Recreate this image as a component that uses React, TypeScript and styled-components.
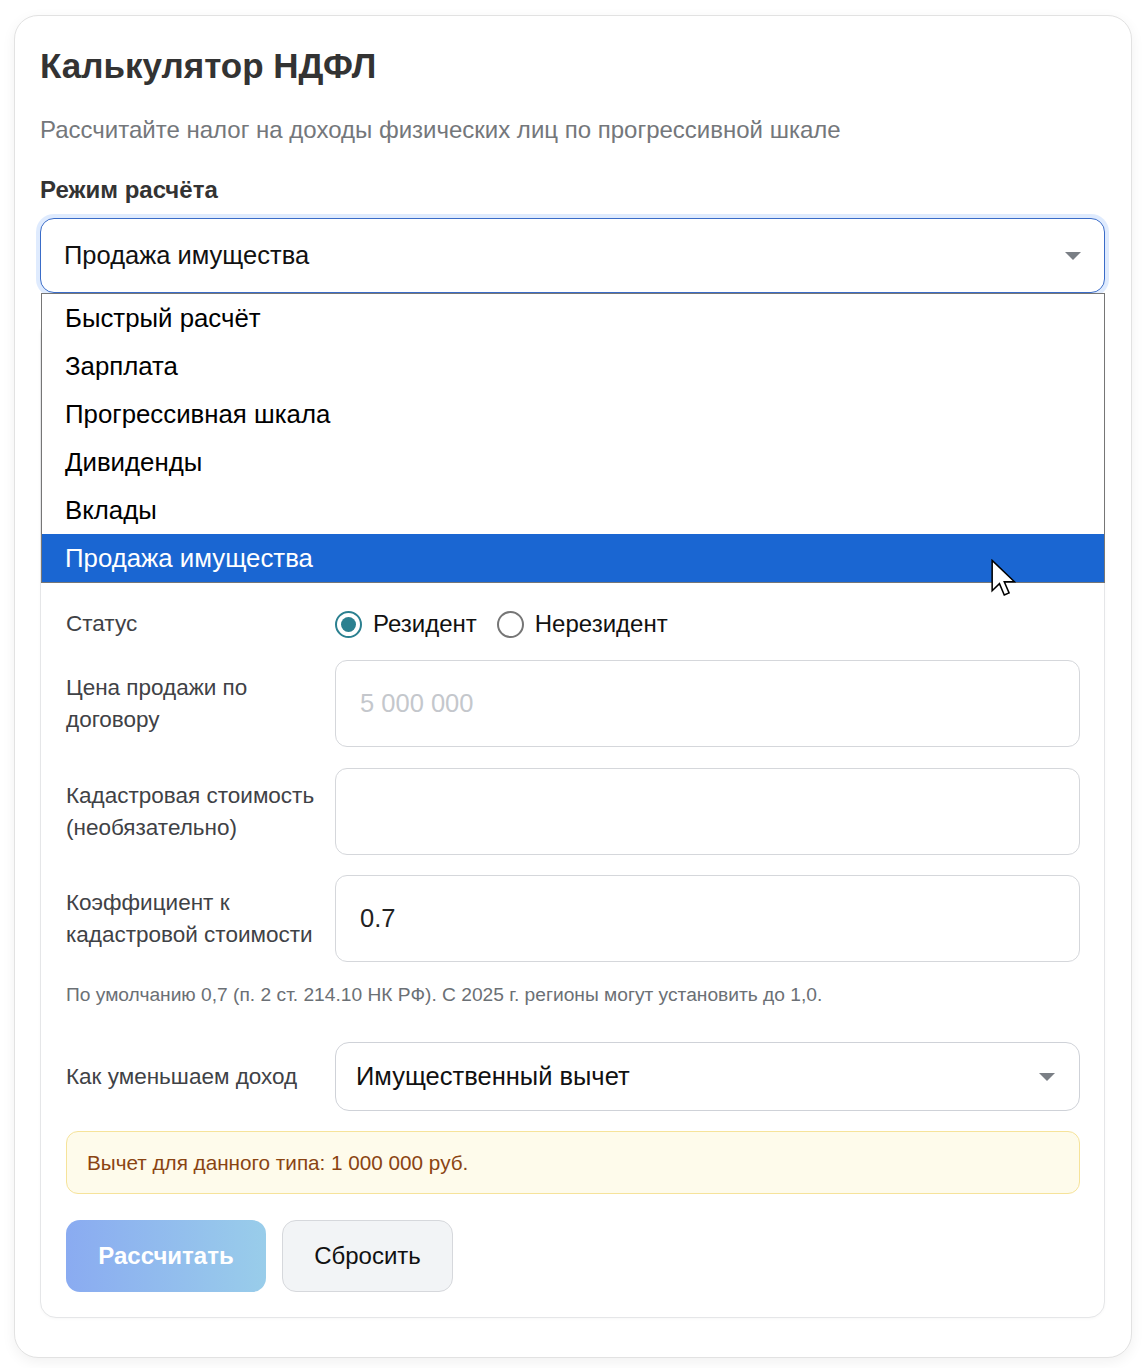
import React from "react";
import styled, { createGlobalStyle } from "styled-components";

const GlobalStyle = createGlobalStyle`
  *, *::before, *::after { box-sizing: border-box; }
  html, body { margin: 0; padding: 0; background: #ffffff; }
  body { font-family: "Liberation Sans", Arial, "Noto Sans", sans-serif; color: #222; }
`;

const Page = styled.div`
  padding: 15px 12px 10px 14px;
`;

const Card = styled.div`
  width: 1118px;
  border: 1px solid #e2e2e2;
  border-radius: 24px;
  background: #fff;
  box-shadow: 0 4px 14px rgba(0, 0, 0, 0.06);
  padding: 25px 26px 39px 25px;
`;

const Title = styled.h1`
  margin: 0;
  font-size: 35px;
  line-height: 50px;
  font-weight: 700;
  color: #333;
`;

const Description = styled.p`
  margin: 22px 0 0;
  font-size: 24px;
  line-height: 33px;
  color: #74777b;
`;

const ModeLabel = styled.div`
  margin-top: 27px;
  font-size: 24px;
  line-height: 33px;
  font-weight: 700;
  color: #333;
`;

const SelectWrap = styled.div<{ $mt?: number }>`
  position: relative;
  margin-top: ${(p) => p.$mt ?? 0}px;
  z-index: 2;
`;

const SelectBox = styled.div<{ $focused?: boolean; $h: number; $pl: number; $pr: number }>`
  display: flex;
  align-items: center;
  justify-content: space-between;
  height: ${(p) => p.$h}px;
  padding: 0 ${(p) => p.$pr}px 0 ${(p) => p.$pl}px;
  border: 1px solid ${(p) => (p.$focused ? "#3a6cc8" : "#cfd2d8")};
  border-radius: 14px;
  background: #fff;
  box-shadow: ${(p) => (p.$focused ? "0 0 0 4px rgba(59, 130, 246, 0.16)" : "none")};
  font-size: 25.5px;
  color: #111;
`;

const Caret = styled.svg`
  display: block;
  flex: none;
`;

const Dropdown = styled.ul`
  position: absolute;
  top: 100%;
  left: 1px;
  right: 0;
  margin: 0;
  padding: 0;
  list-style: none;
  background: #fff;
  border: 1px solid #767676;
  z-index: 5;
`;

const Option = styled.li<{ $selected?: boolean }>`
  position: relative;
  height: 48px;
  display: flex;
  align-items: center;
  padding-left: 23px;
  font-size: 25.8px;
  color: ${(p) => (p.$selected ? "#fff" : "#000")};
  background: ${(p) => (p.$selected ? "#1a66d2" : "#fff")};
`;

const Cursor = styled.svg`
  position: absolute;
  left: 949px;
  top: 25px;
  pointer-events: none;
`;

const Panel = styled.div`
  margin-top: 25px;
  border: 1px solid #e5e6e8;
  border-radius: 16px;
  background: #fff;
  box-shadow: 0 1px 3px rgba(0, 0, 0, 0.03);
  padding: 25px 24px 25px 25px;
  display: flex;
  flex-direction: column;
`;

const Row = styled.div<{ $mt?: number }>`
  display: grid;
  grid-template-columns: 252px 1fr;
  column-gap: 17px;
  align-items: center;
  margin-top: ${(p) => p.$mt ?? 0}px;
`;

const RowLabel = styled.div`
  font-size: 22.5px;
  line-height: 32px;
  color: #3f4246;
`;

const RadioGroup = styled.div`
  display: flex;
  align-items: center;
  height: 40px;
`;

const RadioOption = styled.label`
  display: flex;
  align-items: center;
  gap: 11px;
  margin-right: 20px;
  font-size: 24px;
  color: #111;
`;

const RadioDot = styled.span<{ $checked?: boolean }>`
  width: 27px;
  height: 27px;
  border-radius: 50%;
  border: 2px solid ${(p) => (p.$checked ? "#2b8090" : "#767676")};
  display: flex;
  align-items: center;
  justify-content: center;
  &::after {
    content: "";
    width: 15px;
    height: 15px;
    border-radius: 50%;
    background: ${(p) => (p.$checked ? "#2b8090" : "transparent")};
  }
`;

const Input = styled.input`
  height: 87px;
  width: 100%;
  border: 1px solid #d5d7db;
  border-radius: 12px;
  padding: 0 24px;
  font-family: inherit;
  font-size: 25.5px;
  color: #222;
  background: #fff;
  outline: none;
  &::placeholder {
    color: #c4c7cc;
  }
`;

const Hint = styled.div<{ $mt?: number }>`
  margin-top: ${(p) => p.$mt ?? 0}px;
  font-size: 19.2px;
  line-height: 29px;
  color: #6b7075;
`;

const Alert = styled.div`
  margin-top: 20px;
  height: 63px;
  display: flex;
  align-items: center;
  padding: 0 20px;
  background: #fefbeb;
  border: 1px solid #f6e39a;
  border-radius: 12px;
  font-size: 20.7px;
  color: #8a4412;
`;

const Buttons = styled.div`
  margin-top: 26px;
  display: flex;
  gap: 16px;
`;

const PrimaryButton = styled.button`
  width: 200px;
  height: 72px;
  border: none;
  border-radius: 14px;
  background: linear-gradient(90deg, #8aabf1 0%, #99cdea 100%);
  color: #fff;
  font-family: inherit;
  font-size: 24px;
  font-weight: 700;
`;

const SecondaryButton = styled.button`
  width: 171px;
  height: 72px;
  border: 1px solid #d6d8dc;
  border-radius: 14px;
  background: #f2f4f6;
  color: #111;
  font-family: inherit;
  font-size: 24px;
`;

const CaretIcon = () => (
  <Caret width="16" height="8" viewBox="0 0 16 8">
    <polygon points="0,0 16,0 8,8" fill="#7a7f85" />
  </Caret>
);

const modes = [
  "Быстрый расчёт",
  "Зарплата",
  "Прогрессивная шкала",
  "Дивиденды",
  "Вклады",
  "Продажа имущества",
];

export default function App() {
  return (
    <>
      <GlobalStyle />
      <Page>
        <Card>
          <Title>Калькулятор НДФЛ</Title>
          <Description>
            Рассчитайте налог на доходы физических лиц по прогрессивной шкале
          </Description>
          <ModeLabel>Режим расчёта</ModeLabel>
          <SelectWrap $mt={12}>
            <SelectBox $focused $h={75} $pl={23} $pr={23}>
              <span>Продажа имущества</span>
              <CaretIcon />
            </SelectBox>
            <Dropdown>
              {modes.map((m) => (
                <Option key={m} $selected={m === "Продажа имущества"}>
                  {m}
                  {m === "Продажа имущества" && (
                    <Cursor width="25" height="38" viewBox="0 0 13 19.5">
                      <path
                        d="M0.6 0.6 L0.6 16.4 L4.4 12.7 L6.9 18.6 L9.4 17.5 L6.9 11.7 L12.2 11.7 Z"
                        fill="#fff"
                        stroke="#000"
                        strokeWidth="0.8"
                        strokeLinejoin="miter"
                      />
                    </Cursor>
                  )}
                </Option>
              ))}
            </Dropdown>
          </SelectWrap>
          <Panel>
            <Row $mt={260}>
              <RowLabel>Статус</RowLabel>
              <RadioGroup>
                <RadioOption>
                  <RadioDot $checked />
                  Резидент
                </RadioOption>
                <RadioOption>
                  <RadioDot />
                  Нерезидент
                </RadioOption>
              </RadioGroup>
            </Row>
            <Row $mt={16}>
              <RowLabel>Цена продажи по договору</RowLabel>
              <Input placeholder="5 000 000" />
            </Row>
            <Row $mt={21}>
              <RowLabel>Кадастровая стоимость (необязательно)</RowLabel>
              <Input />
            </Row>
            <Row $mt={20}>
              <RowLabel>Коэффициент к кадастровой стоимости</RowLabel>
              <Input defaultValue="0.7" />
            </Row>
            <Hint $mt={18}>
              По умолчанию 0,7 (п. 2 ст. 214.10 НК РФ). С 2025 г. регионы могут
              установить до 1,0.
            </Hint>
            <Row $mt={33}>
              <RowLabel>Как уменьшаем доход</RowLabel>
              <SelectBox $h={69} $pl={20} $pr={24}>
                <span>Имущественный вычет</span>
                <CaretIcon />
              </SelectBox>
            </Row>
            <Alert>Вычет для данного типа: 1 000 000 руб.</Alert>
            <Buttons>
              <PrimaryButton>Рассчитать</PrimaryButton>
              <SecondaryButton>Сбросить</SecondaryButton>
            </Buttons>
          </Panel>
        </Card>
      </Page>
    </>
  );
}
